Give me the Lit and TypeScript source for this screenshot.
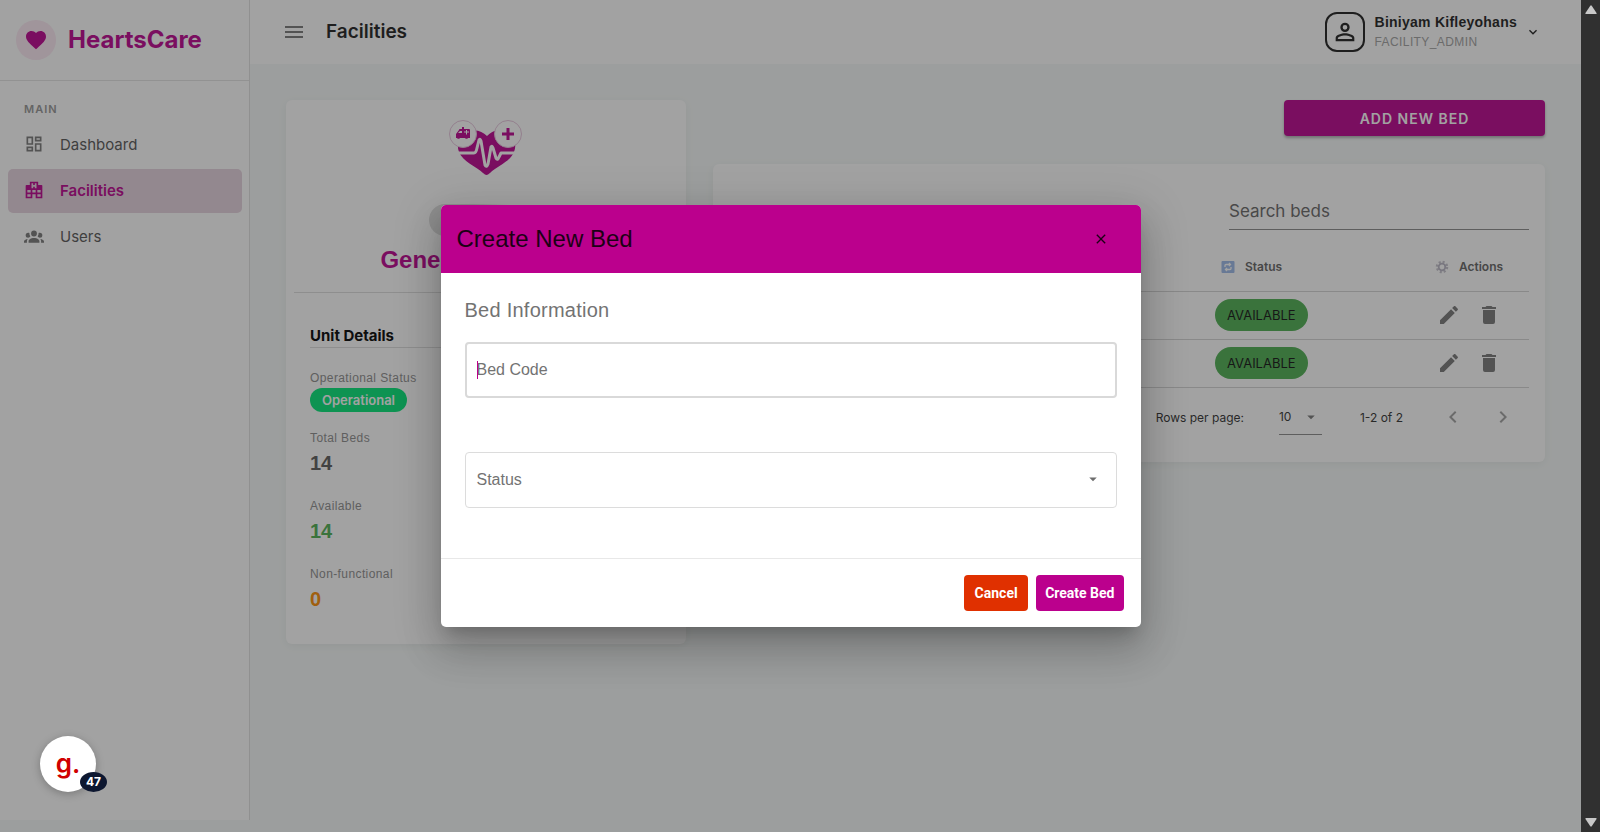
import { LitElement, html, css, svg } from "lit";
import { customElement, property } from "lit/decorators.js";

const ICONS: Record<string, string> = {
  menu: "M3,6H21V8H3V6M3,11H21V13H3V11M3,16H21V18H3V16Z",
  heart:
    "M12,21.35L10.55,20.03C5.4,15.36 2,12.27 2,8.5C2,5.41 4.42,3 7.5,3C9.24,3 10.91,3.81 12,5.08C13.09,3.81 14.76,3 16.5,3C19.58,3 22,5.41 22,8.5C22,12.27 18.6,15.36 13.45,20.03L12,21.35Z",
  dashboard:
    "M19,5V7H15V5H19M9,5V11H5V5H9M19,13V19H15V13H19M9,17V19H5V17H9M21,3H13V9H21V3M11,3H3V13H11V3M21,11H13V21H21V11M11,15H3V21H11V15Z",
  hospital:
    "M2,22V7A1,1 0 0,1 3,6H7V2H17V6H21A1,1 0 0,1 22,7V22H14V17H10V22H2M9,4V10H11V8H13V10H15V4H13V6H11V4H9M4,20H8V17H4V20M4,15H8V12H4V15M16,20H20V17H16V20M16,15H20V12H16V15M10,15H14V12H10V15Z",
  group:
    "M12,5.5A3.5,3.5 0 0,1 15.5,9A3.5,3.5 0 0,1 12,12.5A3.5,3.5 0 0,1 8.5,9A3.5,3.5 0 0,1 12,5.5M5,8C5.56,8 6.08,8.15 6.53,8.42C6.38,9.85 6.8,11.27 7.66,12.38C7.16,13.34 6.16,14 5,14A3,3 0 0,1 2,11A3,3 0 0,1 5,8M19,8A3,3 0 0,1 22,11A3,3 0 0,1 19,14C17.84,14 16.84,13.34 16.34,12.38C17.2,11.27 17.62,9.85 17.47,8.42C17.92,8.15 18.44,8 19,8M5.5,18.25C5.5,16.18 8.41,14.5 12,14.5C15.59,14.5 18.5,16.18 18.5,18.25V20H5.5V18.25M0,20V18.5C0,17.11 1.89,15.94 4.45,15.6C3.86,16.28 3.5,17.22 3.5,18.25V20H0M24,20H20.5V18.25C20.5,17.22 20.14,16.28 19.55,15.6C22.11,15.94 24,17.11 24,18.5V20Z",
  account:
    "M12,4A4,4 0 0,1 16,8A4,4 0 0,1 12,12A4,4 0 0,1 8,8A4,4 0 0,1 12,4M12,6A2,2 0 0,0 10,8A2,2 0 0,0 12,10A2,2 0 0,0 14,8A2,2 0 0,0 12,6M12,13C14.67,13 20,14.33 20,17V20H4V17C4,14.33 9.33,13 12,13M12,14.9C9.03,14.9 5.9,16.36 5.9,17V18.1H18.1V17C18.1,16.36 14.97,14.9 12,14.9Z",
  pencil:
    "M20.71,7.04C21.1,6.65 21.1,6 20.71,5.63L18.37,3.29C18,2.9 17.35,2.9 16.96,3.29L15.12,5.12L18.87,8.87M3,17.25V21H6.75L17.81,9.93L14.06,6.18L3,17.25Z",
  trash:
    "M19,4H15.5L14.5,3H9.5L8.5,4H5V6H19M6,19A2,2 0 0,0 8,21H16A2,2 0 0,0 18,19V7H6V19Z",
  down: "M7.41,8.58L12,13.17L16.59,8.58L18,10L12,16L6,10L7.41,8.58Z",
  caret: "M7,10L12,15L17,10H7Z",
  left: "M15.41,16.58L10.83,12L15.41,7.41L14,6L8,12L14,18L15.41,16.58Z",
  right: "M8.59,16.58L13.17,12L8.59,7.41L10,6L16,12L10,18L8.59,16.58Z",
  close:
    "M19,6.41L17.59,5L12,10.59L6.41,5L5,6.41L10.59,12L5,17.59L6.41,19L12,13.41L17.59,19L19,17.59L13.41,12L19,6.41Z",
  up: "M10.500,5Q12,3 13.500,5L21.500,17Q22,19 20.500,19H3.500Q2,19 2.500,17Z",
  bottom: "M10.500,19Q12,21 13.500,19L21.500,7Q22,5 20.500,5H3.500Q2,5 2.500,7Z",
};

const icon = (name: string, size = 24) => html`<svg
  width=${size}
  height=${size}
  viewBox="0 0 24 24"
  fill="currentColor"
  aria-hidden="true"
>
  ${svg`<path d=${ICONS[name]}></path>`}
</svg>`;

const base = css`
  :host {
    display: block;
    font-family: Inter, "Open Sans", sans-serif;
    --brand: #bb008d;
    --arial: "Liberation Sans", Arial, sans-serif;
  }
  * {
    box-sizing: border-box;
  }
  h1,
  h2,
  h3,
  p,
  dl,
  dd {
    margin: 0;
  }
  svg {
    display: block;
    flex: none;
  }
  button {
    font: inherit;
    color: inherit;
    border: 0;
    padding: 0;
    background: none;
    cursor: pointer;
  }
  a {
    color: inherit;
    text-decoration: none;
  }
`;

@customElement("side-nav")
class SideNav extends LitElement {
  static styles = [
    base,
    css`
      :host {
        background: #fff;
        border-right: 1px solid #e0e0e0;
      }
      .brand {
        display: flex;
        align-items: center;
        gap: 12px;
        padding: 20px 16px;
        border-bottom: 1px solid #e4e4e4;
        color: var(--brand);
        font-size: 24px;
        line-height: 40px;
        font-weight: 700;
      }
      .disc {
        width: 40px;
        height: 40px;
        border-radius: 50%;
        background: #fce8f3;
        display: grid;
        place-items: center;
      }
      .title {
        padding: 20px 24px 6px;
        font-size: 11px;
        line-height: 16px;
        font-weight: 600;
        letter-spacing: 1px;
        color: #959595;
      }
      .list {
        display: grid;
        gap: 2px;
        padding: 0 7px 0 8px;
      }
      .item {
        display: flex;
        align-items: center;
        gap: 16px;
        height: 44px;
        padding: 0 16px;
        border-radius: 5px;
        font-size: 15px;
        line-height: 24px;
        color: #555;
      }
      .item svg {
        margin-bottom: 3px;
        color: #777;
      }
      .active,
      .active svg {
        color: var(--brand);
      }
      .active {
        background: #e6d2de;
        font-weight: 600;
      }
    `,
  ];
  render() {
    const items = [
      ["dashboard", "Dashboard"],
      ["hospital", "Facilities"],
      ["group", "Users"],
    ];
    return html`
      <div class="brand"><span class="disc">${icon("heart")}</span>HeartsCare</div>
      <div class="title">MAIN</div>
      <nav class="list">
        ${items.map(
          ([i, t]) =>
            html`<a class="item ${t === "Facilities" ? "active" : ""}" href="#">${icon(i, 20)}${t}</a>`
        )}
      </nav>
    `;
  }
}

@customElement("top-bar")
class TopBar extends LitElement {
  static styles = [
    base,
    css`
      .bar {
        display: flex;
        align-items: center;
        height: 64px;
        padding: 0 40px 0 32px;
        background: #fff;
      }
      .menu {
        color: #777;
      }
      h1 {
        margin-left: 20px;
        font-size: 19px;
        line-height: 28px;
        font-weight: 600;
        color: #1d1d1d;
      }
      .user {
        display: flex;
        align-items: center;
        margin-left: auto;
        text-align: left;
        font-family: var(--arial);
        color: #1d1d1d;
      }
      .avatar {
        display: grid;
        place-items: center;
        width: 40px;
        height: 40px;
        margin-right: 10px;
        border: 2px solid #1d1d1d;
        border-radius: 12px;
      }
      .name {
        display: block;
        font-size: 14px;
        line-height: 20px;
        font-weight: 700;
        letter-spacing: 0.0178em;
      }
      .role {
        display: block;
        font-size: 12px;
        line-height: 20px;
        letter-spacing: 0.0333em;
        color: #a0a0a0;
      }
      .user > svg {
        margin-left: 8px;
      }
    `,
  ];
  render() {
    return html`<header class="bar">
      <button class="menu" aria-label="Toggle menu">${icon("menu")}</button>
      <h1>Facilities</h1>
      <button class="user">
        <span class="avatar">${icon("account", 28)}</span>
        <span>
          <span class="name">Biniyam Kifleyohans</span>
          <span class="role">FACILITY_ADMIN</span>
        </span>
        ${icon("down", 16)}
      </button>
    </header>`;
  }
}

@customElement("unit-card")
class UnitCard extends LitElement {
  static styles = [
    base,
    css`
      :host {
        padding: 20px 8px 12px;
        background: #fff;
        border-radius: 6px;
        box-shadow: 0 2px 10px rgba(0, 0, 0, 0.06);
      }
      .top {
        display: flex;
        flex-direction: column;
        align-items: center;
        border-bottom: 1px solid #dcdcdc;
      }
      .kind {
        margin-top: 28px;
        width: 114px;
        height: 32px;
        border-radius: 16px;
        background: linear-gradient(90deg, #ddd 40%, #fff 70%);
      }
      h2 {
        padding: 12px 0 20px;
        font-family: var(--arial);
        font-size: 24px;
        line-height: 24px;
        font-weight: 700;
        color: var(--brand);
      }
      .body {
        padding: 31px 16px 0;
      }
      h3 {
        border-bottom: 1px solid #dcdcdc;
        font-size: 15px;
        line-height: 23px;
        font-weight: 700;
        color: #000;
      }
      dl {
        padding-top: 20px;
      }
      .row {
        padding-bottom: 18px;
      }
      dt {
        font-family: var(--arial);
        font-size: 12px;
        line-height: 20px;
        letter-spacing: 0.0333em;
        color: #8c8c8c;
      }
      dd {
        font-family: var(--arial);
        font-size: 20px;
        line-height: 30px;
        font-weight: 700;
        color: #5a5a5a;
      }
      .good {
        color: #4caf50;
      }
      .warn {
        color: #fb8c00;
      }
      .pill {
        display: block;
        width: fit-content;
        padding: 0 12px;
        border-radius: 12px;
        background: #00e676;
        color: #fff;
        font: 600 13px/24px Inter, sans-serif;
      }
      .state {
        padding-bottom: 16px;
      }
    `,
  ];
  render() {
    return html`
      <div class="top">
        <svg width="74" height="56" viewBox="0 0 74 56" role="img" aria-label="Unit logo">
          <path
            fill="#bb008d"
            d="M38 16C43 11 48 9 56 12C66 16 68 24 65 32C61 42 48 46 41 53C38 55.500 37 55.500 34 53C27 46 14 42 10 32C7 24 10 16 18 12C26 9 33 11 38 16Z"
          />
          <path
            d="M8 33H25Q27 33 28 28L30 20Q31 18 32 21L36 45Q37.500 48 39 44L42 27Q43 25 44 28L47 38Q48.500 41 50 37L52 33H68"
            fill="none"
            stroke="#fff"
            stroke-width="3"
            stroke-linecap="round"
            stroke-linejoin="round"
          />
          <g fill="#fff" stroke="#e6c4dc" stroke-width="1">
            <circle cx="14" cy="14" r="13.500" />
            <circle cx="59" cy="14" r="13.500" />
          </g>
          <g fill="#bb008d">
            <path d="M57.500 8h3v4.500h4.500v3h-4.500v4.500h-3v-4.500h-4.500v-3h4.500z" />
            <path
              d="M11 9h2V7h2v2h5q1 0 1 1v8h-2a2 2 0 0 1-3 0h-5a2 2 0 0 1-3 0h-1v-4l3-4q0-1 1-1z"
            />
          </g>
          <path d="M11 11h2v2H9zM17 10h1v1.500h2v1h-2v2h-1v-2h-2v-1h2z" fill="#fff" />
        </svg>
        <span class="kind"></span>
        <h2>General Pediatrics</h2>
      </div>
      <div class="body">
        <h3>Unit Details</h3>
        <dl>
          <div class="row state">
            <dt>Operational Status</dt>
            <dd><span class="pill">Operational</span></dd>
          </div>
          <div class="row"><dt>Total Beds</dt><dd>14</dd></div>
          <div class="row"><dt>Available</dt><dd class="good">14</dd></div>
          <div class="row"><dt>Non-functional</dt><dd class="warn">0</dd></div>
        </dl>
      </div>
    `;
  }
}

@customElement("bed-table")
class BedTable extends LitElement {
  @property({ type: Array }) beds = ["B-001", "B-002"];
  static styles = [
    base,
    css`
      :host {
        padding: 24px 16px 15px;
        background: #fff;
        border-radius: 6px;
        box-shadow: 0 2px 10px rgba(0, 0, 0, 0.06);
      }
      .search {
        position: relative;
        width: 300px;
        margin-left: auto;
      }
      .search input {
        display: block;
        width: 100%;
        height: 42px;
        padding: 0;
        border: 0;
        border-bottom: 1px solid #8a8a8a;
        background: none;
        font: inherit;
      }
      .search label {
        position: absolute;
        inset: 11px auto auto 0;
        font-size: 17px;
        line-height: 24px;
        color: #666;
      }
      table {
        width: 100%;
        margin-top: 13px;
        border-collapse: collapse;
        table-layout: fixed;
      }
      th,
      td {
        height: 48px;
        padding: 0 16px;
        text-align: left;
        border-bottom: 1px solid #d4d4d4;
        font-size: 13px;
      }
      th {
        font-size: 12px;
        font-weight: 600;
        color: #636363;
      }
      .status {
        width: 210px;
      }
      .actions {
        width: 120px;
        padding: 0;
      }
      .head,
      .tools {
        display: flex;
        align-items: center;
      }
      .head svg {
        margin: 0 10px 0 6px;
      }
      .actions .head,
      .tools {
        justify-content: center;
      }
      .actions .head svg {
        margin-left: 0;
      }
      .tools {
        gap: 16px;
        color: #777;
      }
      .chip {
        display: block;
        width: fit-content;
        padding: 0 12px;
        border-radius: 16px;
        background: #4caf50;
        color: #111;
        line-height: 32px;
      }
      .foot {
        display: flex;
        align-items: center;
        justify-content: flex-end;
        height: 59px;
        padding-right: 14px;
        font-size: 12px;
        color: #303030;
      }
      .size {
        position: relative;
        display: flex;
        align-items: center;
        margin: 0 38px 0 35px;
        color: #303030;
      }
      .size select {
        appearance: none;
        width: 43px;
        height: 36px;
        border: 0;
        border-bottom: 1px solid #8a8a8a;
        background: none;
        font: inherit;
        color: inherit;
        padding: 0;
      }
      .size svg {
        position: absolute;
        right: 2px;
        color: #777;
      }
      .page {
        color: #a0a0a0;
        margin-left: 26px;
      }
      .range {
        margin-right: 12px;
      }
    `,
  ];
  render() {
    return html`
      <div class="search">
        <input id="q" type="text" />
        <label for="q">Search beds</label>
      </div>
      <table>
        <thead>
          <tr>
            <th>Bed Code</th>
            <th class="status">
              <div class="head">
                <svg width="14" height="14" viewBox="0 0 14 14" aria-hidden="true">
                  <rect x="0.500" y="1" width="13" height="12" rx="1" fill="#9cb8e8" />
                  <path
                    d="M4 7V5.500Q4 4.500 5 4.500H9M8 3L9.500 4.500L8 6M10 7V8.500Q10 9.500 9 9.500H5M6 8L4.500 9.500L6 11"
                    fill="none"
                    stroke="#fff"
                    stroke-width="1.300"
                  />
                </svg>
                Status
              </div>
            </th>
            <th class="actions">
              <div class="head">
                <svg width="14" height="14" viewBox="0 0 14 14" aria-hidden="true">
                  <circle cx="7" cy="7" r="5" fill="none" stroke="#c4c2cc" stroke-width="2.500" stroke-dasharray="2 1.930" />
                  <circle cx="7" cy="7" r="3.300" fill="none" stroke="#b9b6c4" stroke-width="1.800" />
                </svg>
                Actions
              </div>
            </th>
          </tr>
        </thead>
        <tbody>
          ${this.beds.map(
            (b) => html`<tr>
              <td>${b}</td>
              <td class="status"><span class="chip">AVAILABLE</span></td>
              <td class="actions">
                <div class="tools">
                  <button aria-label="Edit bed">${icon("pencil")}</button>
                  <button aria-label="Delete bed">${icon("trash")}</button>
                </div>
              </td>
            </tr>`
          )}
        </tbody>
      </table>
      <div class="foot">
        <label for="size">Rows per page:</label>
        <span class="size">
          <select id="size"><option>10</option></select>
          ${icon("caret", 18)}
        </span>
        <span class="range">1-2 of 2</span>
        <button class="page" aria-label="Previous page">${icon("left")}</button>
        <button class="page" aria-label="Next page">${icon("right")}</button>
      </div>
    `;
  }
}

@customElement("bed-dialog")
class BedDialog extends LitElement {
  static styles = [
    base,
    css`
      :host {
        width: 700px;
        border-radius: 5px;
        overflow: hidden;
        background: #fff;
        box-shadow: 0 11px 15px -7px rgba(0, 0, 0, 0.2),
          0 24px 38px 3px rgba(0, 0, 0, 0.14), 0 9px 46px 8px rgba(0, 0, 0, 0.12);
        font-family: var(--arial);
      }
      .head {
        display: flex;
        align-items: center;
        justify-content: space-between;
        padding: 18px 32px 18px 16px;
        background: var(--brand);
        color: #1c0015;
      }
      h2 {
        font-size: 24px;
        line-height: 32px;
        font-weight: 400;
      }
      .body {
        padding: 21px 24px 50px;
      }
      h3 {
        margin-bottom: 16px;
        font-size: 20px;
        line-height: 32px;
        font-weight: 400;
        letter-spacing: 0.0125em;
        color: #737373;
      }
      .field {
        position: relative;
        height: 56px;
      }
      .field + .field {
        margin-top: 54px;
      }
      .field input,
      .field select {
        appearance: none;
        display: block;
        width: 100%;
        height: 100%;
        margin: 0;
        padding: 0 12px;
        border: 1px solid #dcdcdc;
        border-radius: 4px;
        background: none;
        font: inherit;
        font-size: 16px;
      }
      .field input {
        border: 2px solid #d9d9d9;
      }
      .field label {
        position: absolute;
        inset: 16px auto auto 12px;
        font-size: 16px;
        line-height: 24px;
        color: #737373;
        pointer-events: none;
      }
      .field svg {
        position: absolute;
        inset: 18px 15px auto auto;
        color: #6d6d6d;
      }
      .caret {
        position: absolute;
        inset: 19px auto auto 12px;
        width: 1px;
        height: 18px;
        background: var(--brand);
      }
      .foot {
        display: flex;
        justify-content: flex-end;
        gap: 8px;
        padding: 16px 17px 16px 16px;
        border-top: 1px solid #e8e8e8;
      }
      .foot button {
        min-width: 64px;
        height: 36px;
        padding: 0 9px;
        border-radius: 4px;
        background: var(--brand);
        color: #fff;
        font: 700 14px Roboto, sans-serif;
      }
      .foot .cancel {
        background: #e03000;
      }
    `,
  ];
  render() {
    return html`
      <div class="head">
        <h2>Create New Bed</h2>
        <button aria-label="Close">${icon("close", 16)}</button>
      </div>
      <div class="body">
        <h3>Bed Information</h3>
        <div class="field">
          <input id="code" type="text" />
          <label for="code">Bed Code</label>
          <span class="caret"></span>
        </div>
        <div class="field">
          <select id="status"><option></option></select>
          <label for="status">Status</label>
          ${icon("caret", 18)}
        </div>
      </div>
      <div class="foot">
        <button class="cancel">Cancel</button>
        <button>Create Bed</button>
      </div>
    `;
  }
}

@customElement("app-root")
class AppRoot extends LitElement {
  static styles = [
    base,
    css`
      :host {
        display: flex;
        height: 100vh;
        overflow: hidden;
      }
      .view {
        position: relative;
        flex: 1;
        min-width: 0;
        display: flex;
        background: #f5f9f8;
      }
      side-nav {
        flex: none;
        width: 250px;
        margin-bottom: 12px;
      }
      .main {
        flex: 1;
        min-width: 0;
      }
      .content {
        display: grid;
        grid-template-columns: minmax(0, 12fr) minmax(0, 25fr);
        align-items: start;
        gap: 27px;
        padding: 36px;
      }
      .beds {
        display: grid;
        gap: 28px;
      }
      .add {
        justify-self: end;
        width: 261px;
        height: 36px;
        border-radius: 4px;
        background: var(--brand);
        color: #fff;
        font-size: 14px;
        font-weight: 600;
        letter-spacing: 1px;
        box-shadow: 0 2px 3px rgba(0, 0, 0, 0.3);
      }
      .scrim {
        position: absolute;
        inset: 0;
        display: grid;
        place-items: center;
        background: rgba(33, 33, 33, 0.42);
      }
      .help {
        position: absolute;
        inset: auto auto 40px 40px;
        width: 56px;
        height: 56px;
        border-radius: 50%;
        background: #fff;
        box-shadow: 0 2px 8px rgba(0, 0, 0, 0.25);
        color: #d00000;
        font: 600 26px/48px Inter, sans-serif;
      }
      .count {
        position: absolute;
        inset: auto -11px 0 auto;
        width: 27px;
        border-radius: 50%;
        background: #0d1730;
        color: #fff;
        font: 700 12px/20px Inter, sans-serif;
      }
      .scroll {
        flex: none;
        width: 19px;
        display: flex;
        flex-direction: column;
        justify-content: space-between;
        align-items: center;
        padding: 3px 0;
        background: #303030;
        color: #c8c8c8;
      }
    `,
  ];
  render() {
    return html`
      <div class="view">
        <side-nav></side-nav>
        <main class="main">
          <top-bar></top-bar>
          <div class="content">
            <unit-card></unit-card>
            <div class="beds">
              <button class="add">ADD NEW BED</button>
              <bed-table></bed-table>
            </div>
          </div>
        </main>
        <div class="scrim"><bed-dialog role="dialog" aria-label="Create New Bed"></bed-dialog></div>
        <button class="help" aria-label="Help, 47 items">g.<span class="count">47</span></button>
      </div>
      <div class="scroll">${icon("up", 14)}${icon("bottom", 14)}</div>
    `;
  }
}
